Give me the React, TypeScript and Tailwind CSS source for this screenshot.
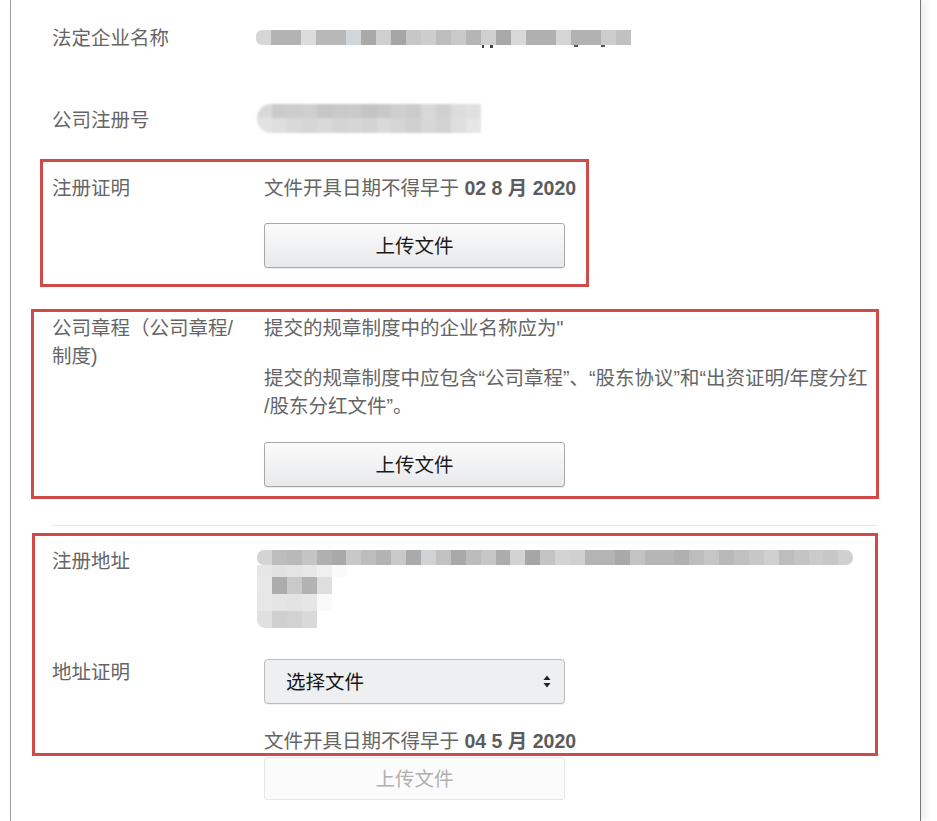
import React from "react";

const bar1 = ['#d6d6d6','#b3b3b3','#b3b3b3','#dcdcdc','#b8b8b8','#b8b8b8','#d3d6d9','#a9a9a9','#cfcfcf','#a5a5a5','#c7c7c7','#cdcdcd','#bdbdbd','#c9c9c9','#b5b5b5','#d0d0d0','#a8a8a8','#d8d8d8','#b0b0b0','#b0b0b0','#d5d5d5','#b2b2b2','#b2b2b2','#cdcdcd','#c1c1c1'];
const bar2a = ['#d9d9d9','#cbcbcb','#cdcdcd','#cfcfcf','#c6c6c6','#c9c9c9','#cacaca','#c4c4c4','#c8c8c8','#cfcfcf','#cbcbcb','#d8d8d8','#d0d0d0','#dcdcdc','#e0e0e0'];
const bar2b = ['#e2e2e2','#dedede','#d8d8d8','#d6d6d6','#d9d9d9','#d4d4d4','#d6d6d6','#d3d3d3','#dadada','#d5d5d5','#cfcfcf','#d7d7d7','#d2d2d2','#dedede','#e6e6e6'];
const bar3 = ['#d4d4d4','#bdbdbd','#b9b9b9','#c4c4c4','#b0b0b0','#a9a9a9','#c8c8c8','#bdbdbd','#b3b3b3','#c9c9c9','#aaaaaa','#d0d3d6','#c2c2c2','#a9a9a9','#bcbcbc','#c6c6c6','#acacac','#d2d2d2','#a6a6a6','#c4c4c4','#d3d3d3','#d0d0d0','#b4b4b4','#b4b4b4','#a9a9a9','#c3c3c3','#b6b6b6','#b6b6b6','#b0b0b0','#bdbdbd','#c6c6c6','#b9b9b9','#c0c0c0','#c7c7c7','#d0d0d0','#bdbdbd','#c4c4c4','#cbcbcb','#c7c7c7','#d0d0d0'];
const block3 = [
  ['#e6e6e6','#e2e2e2','#e4e4e4','#e8e8e8','#f0f0f0','#fafafa'],
  ['#e8e8e8','#acacac','#c9c9c9','#b2b2b2','#dedede','#ffffff'],
  ['#e7e7e7','#e5e5e5','#e3e3e3','#e6e6e6','#fafafa','#ffffff'],
  ['#e0e0e0','#cfcfcf','#d2d2d2','#d9d9d9','#ffffff','#ffffff'],
];

function Cells({ colors, h }: { colors: string[]; h: string }) {
  return (
    <div className={`flex ${h}`}>
      {colors.map((c, i) => (
        <div key={i} className="flex-1" style={{ backgroundColor: c }} />
      ))}
    </div>
  );
}

function UploadButton({ disabled }: { disabled?: boolean }) {
  if (disabled) {
    return (
      <div className="flex h-[43px] w-[301px] items-center justify-center rounded-[3px] border border-[#e6e6e6] bg-[#fbfbfb] text-[#b0b0b0]">
        上传文件
      </div>
    );
  }
  return (
    <div className="flex h-[45px] w-[301px] items-center justify-center rounded-[3px] border border-[#a8a8a8] bg-gradient-to-b from-[#fbfbfb] to-[#e8e9eb] text-[#1a1a1a] shadow-[0_1px_1px_rgba(0,0,0,0.08)]">
      上传文件
    </div>
  );
}

function DateLine({ date }: { date: string }) {
  return (
    <div className="h-[28px] whitespace-nowrap">
      文件开具日期不得早于 <span className="font-bold text-[#5c5c5c]">{date}</span>
    </div>
  );
}

export default function App() {
  return (
    <div className="relative h-[821px] w-[937px] overflow-hidden bg-white font-[Liberation_Sans,Noto_Sans_CJK_SC,sans-serif] text-[19.5px] leading-[28px] text-[#656565]">
      <div className="ml-[10px] h-full w-[911px] border-l border-r border-l-[#a0a0a0] border-r-[#777777] bg-white pl-[41px] pt-[24px] shadow-[5px_0_7px_rgba(0,0,0,0.07)]">
        {/* 法定企业名称 */}
        <div className="grid grid-cols-[212px_1fr]">
          <div>法定企业名称</div>
          <div className="-ml-[8px] pt-[6px]">
            <div className="w-[375px] overflow-hidden rounded-l-[6px] blur-[0.6px]">
              <Cells colors={bar1} h="h-[15px]" />
            </div>
            <div className="relative h-[4px] w-[375px]">
              <div className="absolute left-[226px] top-0 h-[3px] w-[2px] bg-[#444]" />
              <div className="absolute left-[234px] top-0 h-[3px] w-[3px] bg-[#444]" />
              <div className="absolute left-[318px] top-0 h-[2px] w-[4px] bg-[#555]" />
              <div className="absolute left-[345px] top-0 h-[2px] w-[4px] bg-[#555]" />
            </div>
          </div>
        </div>

        {/* 公司注册号 */}
        <div className="mt-[54px] grid grid-cols-[212px_1fr]">
          <div>公司注册号</div>
          <div className="-ml-[7px] -mt-[2px]">
            <div className="w-[224px] overflow-hidden rounded-l-[14px] blur-[0.8px]">
              <Cells colors={bar2a} h="h-[14px]" />
              <Cells colors={bar2b} h="h-[15px]" />
            </div>
          </div>
        </div>

        {/* 注册证明 */}
        <div className="mt-[40px] grid grid-cols-[212px_1fr]">
          <div>注册证明</div>
          <div>
            <DateLine date="02 8 月 2020" />
            <div className="mt-[21px]">
              <UploadButton />
            </div>
          </div>
        </div>

        {/* 公司章程 */}
        <div className="mt-[46px] grid grid-cols-[212px_1fr]">
          <div>
            公司章程（公司章程/
            <br />
            制度)
          </div>
          <div className="whitespace-nowrap">
            <div>提交的规章制度中的企业名称应为"</div>
            <div className="mt-[22px]">
              提交的规章制度中应包含“公司章程”、“股东协议”和“出资证明/年度分红
              <br />
              /股东分红文件”。
            </div>
            <div className="mt-[22px]">
              <UploadButton />
            </div>
          </div>
        </div>

        <div className="mt-[38px] mr-[43px] border-t border-[#e8e8e8]" />

        {/* 注册地址 */}
        <div className="mt-[21px] grid grid-cols-[212px_1fr]">
          <div>注册地址</div>
          <div className="-ml-[7px] pt-[3px]">
            <div className="w-[596px] overflow-hidden rounded-l-[7px] rounded-r-[7px] blur-[0.7px]">
              <Cells colors={bar3} h="h-[15px]" />
            </div>
            <div className="w-[90px] overflow-hidden rounded-bl-[8px] blur-[0.7px]">
              {block3.map((row, i) => (
                <Cells key={i} colors={row} h={i === 0 ? "h-[12px]" : "h-[17px]"} />
              ))}
            </div>
          </div>
        </div>

        {/* 地址证明 */}
        <div className="mt-[30px] grid grid-cols-[212px_1fr]">
          <div>地址证明</div>
          <div>
            <div className="mt-[1px] flex h-[45px] w-[301px] items-center justify-between rounded-[4px] border border-[#bcbcbc] bg-[#eeeff1] pl-[21px] pr-[13px] text-[#161616] shadow-[0_1px_1px_rgba(0,0,0,0.06)]">
              <span>选择文件</span>
              <svg width="8" height="13" viewBox="0 0 8 13">
                <path d="M4 0.5 L7.5 5 L0.5 5 Z" fill="#222" />
                <path d="M4 12.5 L7.5 8 L0.5 8 Z" fill="#222" />
              </svg>
            </div>
            <div className="mt-[23px]">
              <DateLine date="04 5 月 2020" />
            </div>
            <div className="mt-[2px]">
              <UploadButton disabled />
            </div>
          </div>
        </div>
      </div>

      {/* red annotation boxes */}
      <div className="pointer-events-none absolute left-[40px] top-[159px] h-[128px] w-[549px] border-[3px] border-[#d04a4a]" />
      <div className="pointer-events-none absolute left-[31px] top-[309px] h-[190px] w-[848px] border-[3px] border-[#d04a4a]" />
      <div className="pointer-events-none absolute left-[32px] top-[533px] h-[223px] w-[846px] border-[3px] border-[#d04a4a]" />
    </div>
  );
}
